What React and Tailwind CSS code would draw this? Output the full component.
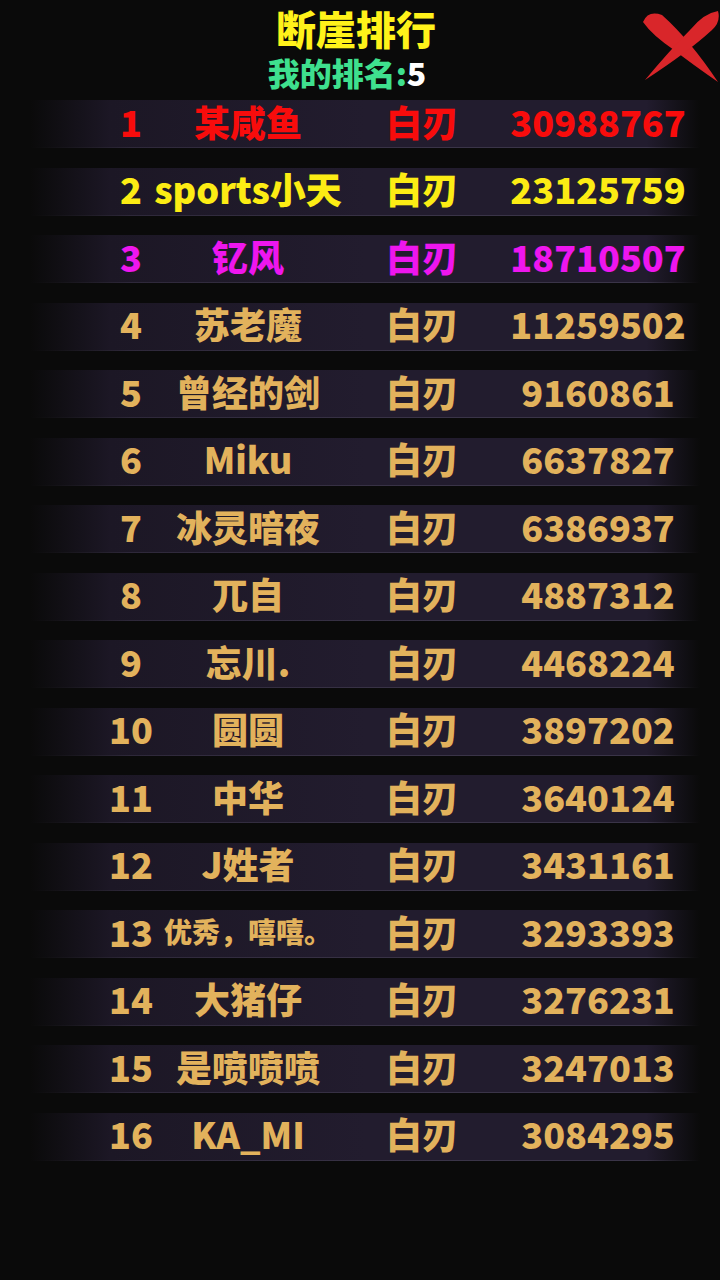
const rows = [
  ["1", "某咸鱼", "30988767"],
  ["2", "sports小天", "23125759"],
  ["3", "钇风", "18710507"],
  ["4", "苏老魔", "11259502"],
  ["5", "曾经的剑", "9160861"],
  ["6", "Miku", "6637827"],
  ["7", "冰灵暗夜", "6386937"],
  ["8", "兀自", "4887312"],
  ["9", "忘川.", "4468224"],
  ["10", "圆圆", "3897202"],
  ["11", "中华", "3640124"],
  ["12", "J姓者", "3431161"],
  ["13", "优秀，嘻嘻。", "3293393"],
  ["14", "大猪仔", "3276231"],
  ["15", "是喷喷喷", "3247013"],
  ["16", "KA_MI", "3084295"],
];

const rankColor = (i) => {
  if (i === 0) return "text-[#f80c0c]";
  if (i === 1) return "text-[#fcec14]";
  if (i === 2) return "text-[#ee16ee]";
  return "text-[#e2b25c]";
};

function CloseIcon() {
  return (
    <svg className="absolute top-0 right-0" width="80" height="90" viewBox="0 0 80 90">
      <path d="M3 22 Q8 10 22 15 Q50 40 78 82 Q52 64 34 50 Q12 35 3 22Z" fill="#d9262a" />
      <path d="M78 11 Q81 22 72 30 Q48 52 5 80 Q30 50 50 30 Q64 13 78 11Z" fill="#d9262a" />
    </svg>
  );
}

export default function App() {
  return (
    <div
      className="relative w-[720px] h-[1280px] bg-[#0a0a0a] overflow-hidden font-black"
      style={{ fontFamily: '"Noto Sans CJK SC", "Noto Sans", sans-serif' }}
    >
      <CloseIcon />
      <div className="flex flex-col items-center pt-[4px]">
        <div className="text-[40px] leading-[48px] text-[#fff21a] -ml-[8px]">断崖排行</div>
        <div className="flex text-[32px] leading-[40px] -ml-[26px]">
          <span className="text-[#3fe08e]">我的排名:</span>
          <span className="text-white">5</span>
        </div>
      </div>

      <div className="flex flex-col gap-[19.5px] mt-[8px]">
        {rows.map((r, i) => (
          <div key={i} className="flex flex-col ml-[30px] w-[670px]">
            <div
              className={`flex items-center h-[47px] pl-[41px] pb-[6px] text-[36px] leading-none bg-[linear-gradient(90deg,transparent_0%,#1c1725_12%,#221c2e_50%,#221c2e_92%,transparent_100%)] ${rankColor(i)}`}
            >
              <div className="w-[120px] flex justify-center whitespace-nowrap">{r[0]}</div>
              <div className={`w-[114px] flex justify-center whitespace-nowrap ${i === 12 ? "text-[28px]" : ""}`}>{r[1]}</div>
              <div className="w-[234px] flex justify-center whitespace-nowrap">白刃</div>
              <div className="w-[118px] flex justify-center whitespace-nowrap">{r[2]}</div>
            </div>
            <div className="h-px bg-[linear-gradient(90deg,transparent_0%,#2e283a_15%,#3a3448_60%,#3a3448_92%,transparent_100%)]" />
          </div>
        ))}
      </div>
    </div>
  );
}
